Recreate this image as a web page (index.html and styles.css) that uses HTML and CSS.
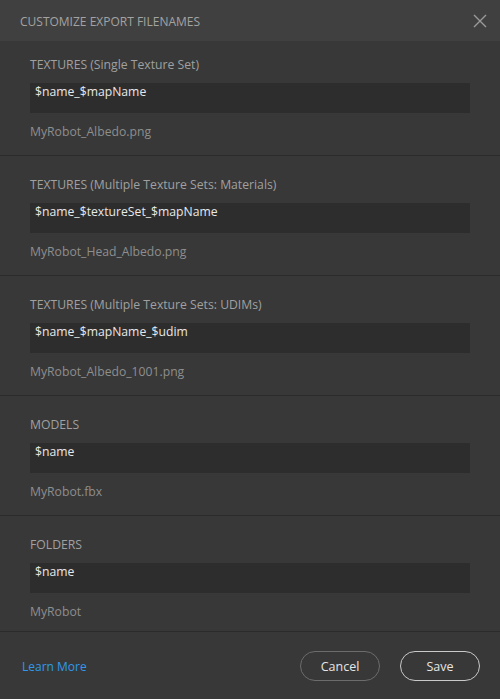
FILE: index.html
```html
<!DOCTYPE html>
<html>
<head>
<meta charset="utf-8">
<link rel="stylesheet" href="styles.css">
</head>
<body>
<div class="dialog">
  <header class="header">
    <span class="title">CUSTOMIZE EXPORT FILENAMES</span>
    <svg class="close" width="14" height="14" viewBox="0 0 14 14"><path d="M1 1 L13 13 M13 1 L1 13" stroke="#9a9a9a" stroke-width="1.4" fill="none"/></svg>
  </header>
  <main class="sections">
    <section class="section">
      <div class="label">TEXTURES (Single Texture Set)</div>
      <div class="input">$name_$mapName</div>
      <div class="example">MyRobot_Albedo.png</div>
    </section>
    <section class="section">
      <div class="label">TEXTURES (Multiple Texture Sets: Materials)</div>
      <div class="input">$name_$textureSet_$mapName</div>
      <div class="example">MyRobot_Head_Albedo.png</div>
    </section>
    <section class="section">
      <div class="label">TEXTURES (Multiple Texture Sets: UDIMs)</div>
      <div class="input">$name_$mapName_$udim</div>
      <div class="example">MyRobot_Albedo_1001.png</div>
    </section>
    <section class="section">
      <div class="label">MODELS</div>
      <div class="input">$name</div>
      <div class="example">MyRobot.fbx</div>
    </section>
    <section class="section">
      <div class="label">FOLDERS</div>
      <div class="input">$name</div>
      <div class="example">MyRobot</div>
    </section>
  </main>
  <footer class="footer">
    <a class="learn">Learn More</a>
    <div class="buttons">
      <button class="btn btn-cancel">Cancel</button>
      <button class="btn btn-save">Save</button>
    </div>
  </footer>
</div>
</body>
</html>
```
FILE: styles.css
```css
html, body {
  margin: 0;
  padding: 0;
  background: #383838;
}
body {
  font-family: "Open Sans", "Liberation Sans", sans-serif;
  width: 500px;
  height: 699px;
  overflow: hidden;
}
.dialog {
  display: flex;
  flex-direction: column;
  height: 699px;
}
.header {
  height: 41px;
  background: #404040;
  display: flex;
  align-items: center;
  justify-content: space-between;
  padding: 1px 13px 0 20px;
  box-sizing: border-box;
}
.title {
  color: #a3a3a3;
  font-size: 12px;
}
.close {
  display: block;
}
.section {
  padding: 20px 30px 14px 30px;
  border-bottom: 1px solid #2b2b2b;
  display: flex;
  flex-direction: column;
}
.section:first-child {
  padding-top: 15px;
}
.section:last-child {
  padding-bottom: 10px;
  border-bottom: none;
}
.label {
  color: #a0a0a0;
  font-size: 12.2px;
  line-height: 18px;
  margin-bottom: 9px;
}
.input {
  height: 30px;
  box-sizing: border-box;
  background: #2d2d2d;
  color: #e8e8e8;
  font-size: 12.2px;
  line-height: 18px;
  padding: 0 5px;
  margin-bottom: 10px;
}
.example {
  color: #8e8e8e;
  font-size: 12.2px;
  line-height: 18px;
}
.footer {
  flex: 1;
  border-top: 1px solid #2b2b2b;
  display: flex;
  align-items: center;
  justify-content: space-between;
  padding: 1px 20px 0 22px;
  box-sizing: border-box;
}
.learn {
  color: #2f98ec;
  font-size: 12px;
}
.buttons {
  display: flex;
  gap: 20px;
}
.btn {
  width: 80px;
  height: 30px;
  border-radius: 15px;
  background: transparent;
  font-family: "Open Sans", "Liberation Sans", sans-serif;
  font-size: 12.5px;
  color: #e6e6e6;
  padding: 0;
}
.btn-cancel {
  border: 1px solid #6c6c6c;
}
.btn-save {
  border: 1px solid #c9c9c9;
}
```
